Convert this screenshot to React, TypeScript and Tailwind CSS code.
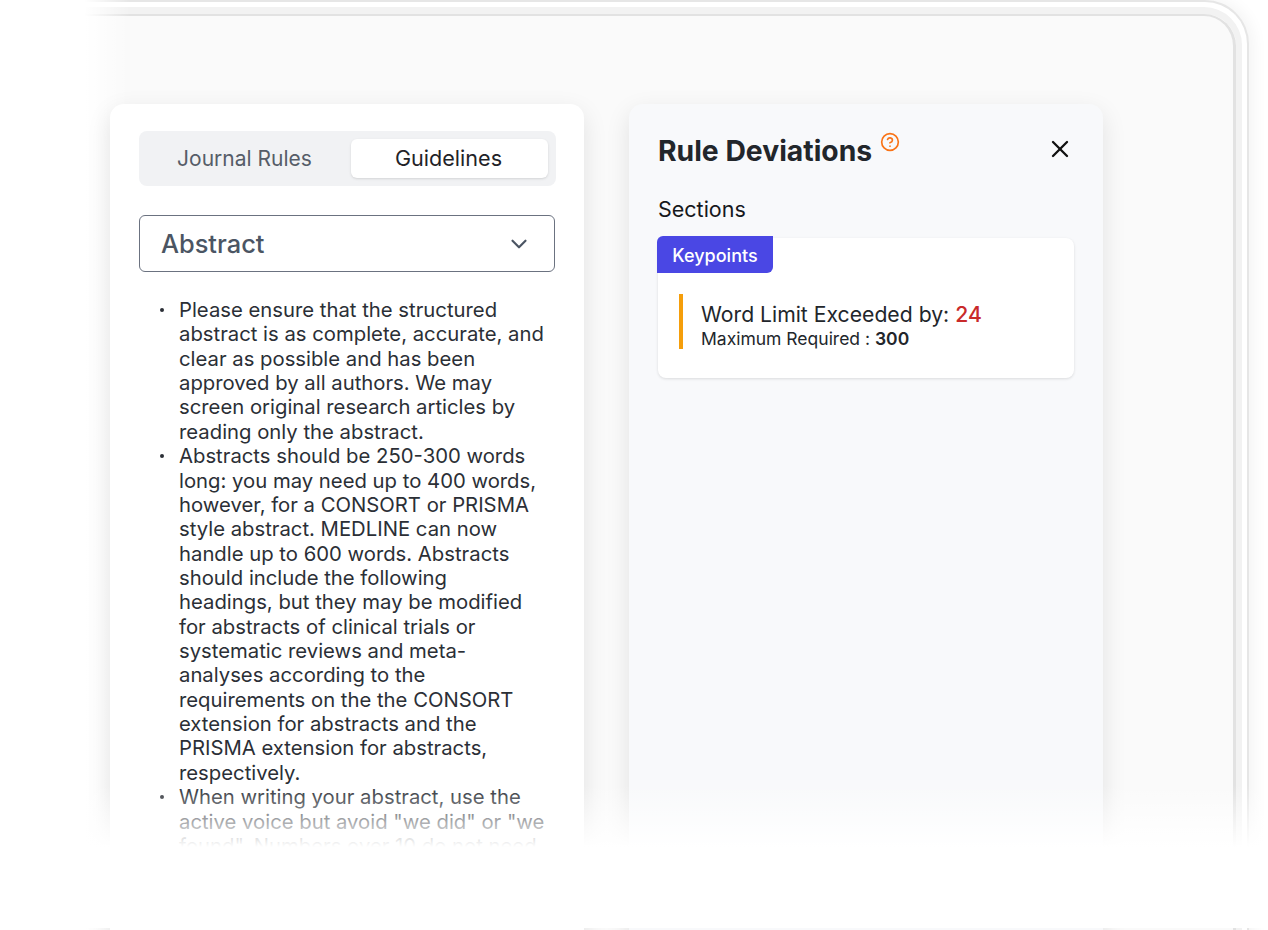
import { ChevronDown, CircleHelp, X } from "lucide-react";

const bullets = [
  [
    "Please ensure that the structured",
    "abstract is as complete, accurate, and",
    "clear as possible and has been",
    "approved by all authors. We may",
    "screen original research articles by",
    "reading only the abstract.",
  ],
  [
    "Abstracts should be 250-300 words",
    "long: you may need up to 400 words,",
    "however, for a CONSORT or PRISMA",
    "style abstract. MEDLINE can now",
    "handle up to 600 words. Abstracts",
    "should include the following",
    "headings, but they may be modified",
    "for abstracts of clinical trials or",
    "systematic reviews and meta-",
    "analyses according to the",
    "requirements on the the CONSORT",
    "extension for abstracts and the",
    "PRISMA extension for abstracts,",
    "respectively.",
  ],
  [
    "When writing your abstract, use the",
    'active voice but avoid "we did" or "we',
    'found". Numbers over 10 do not need',
  ],
];

export default function App() {
  return (
    <div className="relative h-[930px] w-full overflow-hidden bg-white font-['Inter',sans-serif]">
      {/* nested device frame */}
      <div className="ml-[60px] h-[1100px] w-[1189px] rounded-tr-[44px] border-t-2 border-r-2 border-[#e6e6e6] bg-white pt-[5px] pr-[5px] shadow-[4px_0_16px_rgba(0,0,0,0.05)]">
        <div className="h-full rounded-tr-[38px] border-t-[7px] border-r-[6px] border-[#f2f2f2]">
          <div className="flex h-full gap-[45px] rounded-tr-[32px] border-t-[2px] border-r-[3px] border-[#e2e2e2] bg-[#fafafa] pt-[88px] pl-[50px]">
            {/* left card */}
            <div className="relative z-10 h-[960px] w-[474px] rounded-t-[14px] bg-white px-[29px] pt-[27px] shadow-[0_8px_24px_rgba(0,0,0,0.1)]">
              <div className="flex h-[55px] w-[417px] items-center gap-[4px] rounded-lg bg-[#f1f2f4] px-[8px]">
                <div className="flex-1 pr-[5px] text-center text-[21px] text-[#565d68]">Journal Rules</div>
                <div className="flex h-[39px] w-[197px] items-center justify-center rounded-md bg-white pr-[2px] text-[21.6px] text-[#1f2328] shadow-sm">
                  Guidelines
                </div>
              </div>
              <div className="mt-[29px] flex h-[57px] w-[416px] items-center justify-between rounded-md border border-[#6b7280] pt-[1px] pr-[22px] pl-[21px]">
                <span className="text-[25.4px] font-medium text-[#4b5563]">Abstract</span>
                <ChevronDown className="h-[26px] w-[26px] text-[#4b5563]" strokeWidth={2} />
              </div>
              <ul className="mt-[26px] text-[20.3px] leading-[24.36px] text-[#2b2f36]">
                {bullets.map((lines) => (
                  <li key={lines[0]} className="flex">
                    <span className="mt-[10px] ml-[21px] h-[4px] w-[4px] shrink-0 rounded-full bg-[#2b2f36]" />
                    <div className="ml-[15px]">
                      {lines.map((line) => (
                        <div key={line} className="whitespace-nowrap">
                          {line}
                        </div>
                      ))}
                    </div>
                  </li>
                ))}
              </ul>
            </div>

            {/* right card */}
            <div className="relative z-10 h-[960px] w-[474px] rounded-t-[14px] bg-[#f8f9fb] pt-[27px] pr-[29px] pl-[29px] shadow-[0_8px_24px_rgba(0,0,0,0.1)]">
              <div className="flex items-start justify-between">
                <div className="flex items-start gap-[8px]">
                  <h2 className="mt-[1px] text-[28.3px] leading-[38px] font-bold text-[#22262b]">Rule Deviations</h2>
                  <CircleHelp className="mt-[1px] h-[20px] w-[20px] text-[#f97316]" />
                </div>
                <X className="mt-[4px] h-[28px] w-[28px] text-[#111]" strokeWidth={2} />
              </div>
              <div className="mt-[24px] text-[21.5px] leading-[30px] text-[#16181b]">Sections</div>
              <div className="mt-[14px] h-[140px] w-[416px] rounded-lg bg-white shadow-[0_1px_3px_rgba(0,0,0,0.12)]">
                <div className="-mt-[2px] -ml-[1px] inline-block h-[37px] w-[116px] rounded-tl-md rounded-br-md bg-[#4a47e4] pt-[1px] text-center text-[18px] leading-[37px] font-medium text-white">
                  Keypoints
                </div>
                <div className="mt-[21px] ml-[21px] border-l-4 border-[#f59e0b] pt-[5px] pl-[18px]">
                  <div className="text-[21.2px] leading-[30px] text-[#22262b]">
                    Word Limit Exceeded by: <span className="font-medium text-[#c92a2a]">24</span>
                  </div>
                  <div className="text-[17.5px] leading-[20px] text-[#22262b]">
                    Maximum Required : <span className="font-semibold">300</span>
                  </div>
                </div>
              </div>
            </div>
          </div>
        </div>
      </div>

      {/* left fade sits under the cards, bottom fade over everything */}
      <div className="absolute top-0 bottom-0 left-0 w-[130px] bg-gradient-to-r from-white from-[65%] to-transparent" />
      <div className="absolute inset-x-0 top-[785px] z-20 h-[62px] bg-gradient-to-b from-transparent to-white" />
      <div className="absolute inset-x-0 top-[847px] z-20 h-[81px] bg-white" />
    </div>
  );
}
